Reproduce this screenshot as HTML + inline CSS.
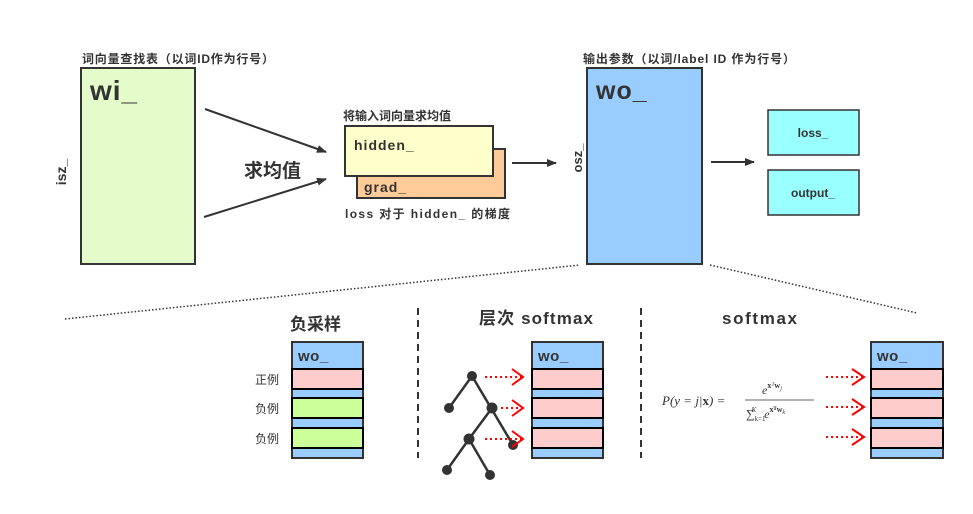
<!DOCTYPE html>
<html><head><meta charset="utf-8"><style>
body{margin:0;background:#fff;width:973px;height:509px;overflow:hidden}
svg text{font-family:"Liberation Sans","Noto Sans CJK SC",sans-serif;fill:#333}
</style></head><body>
<svg width="973" height="509" viewBox="0 0 973 509" xmlns="http://www.w3.org/2000/svg">
<defs>
<marker id="ah" markerWidth="10" markerHeight="8" refX="9" refY="4" orient="auto" markerUnits="userSpaceOnUse"><path d="M0,0 L10,4 L0,8 Z" fill="#333"/></marker>
</defs>
<text x="82" y="63" font-size="12" font-weight="bold" textLength="192">词向量查找表（以词ID作为行号）</text>
<rect x="81" y="68" width="114" height="196" fill="#e4fcca" stroke="#333" stroke-width="2"/>
<text x="90" y="100" font-size="28" font-weight="bold" letter-spacing="1">wi_</text>
<text transform="translate(66,172) rotate(-90)" font-size="14" font-weight="bold" text-anchor="middle">isz_</text>
<line x1="205" y1="109" x2="326" y2="152" stroke="#333" stroke-width="2" marker-end="url(#ah)"/>
<line x1="204" y1="217" x2="326" y2="179" stroke="#333" stroke-width="2" marker-end="url(#ah)"/>
<text x="244" y="177" font-size="19" font-weight="bold">求均值</text>
<text x="343" y="120" font-size="12" font-weight="bold">将输入词向量求均值</text>
<rect x="357" y="149" width="148" height="49" fill="#ffcc99" stroke="#333" stroke-width="2"/>
<rect x="345" y="126" width="148" height="50" fill="#ffffcc" stroke="#333" stroke-width="2"/>
<text x="354" y="150" font-size="14" font-weight="bold" letter-spacing="1">hidden_</text>
<text x="364" y="192" font-size="14" font-weight="bold" letter-spacing="1">grad_</text>
<text x="345" y="218" font-size="12" font-weight="bold" textLength="165">loss 对于 hidden_ 的梯度</text>
<line x1="512" y1="163" x2="556" y2="163" stroke="#333" stroke-width="2" marker-end="url(#ah)"/>
<text x="583" y="63" font-size="12" font-weight="bold" textLength="212">输出参数（以词/label ID 作为行号）</text>
<rect x="587" y="68" width="115" height="196" fill="#99ccff" stroke="#333" stroke-width="2"/>
<text x="596" y="99" font-size="25" font-weight="bold" letter-spacing="1">wo_</text>
<text transform="translate(582,158) rotate(-90)" font-size="13" font-weight="bold" text-anchor="middle">osz_</text>
<line x1="711" y1="162" x2="754" y2="162" stroke="#333" stroke-width="2" marker-end="url(#ah)"/>
<rect x="768" y="110" width="91" height="45" fill="#99ffff" stroke="#333" stroke-width="1.5"/>
<text x="813" y="137" font-size="12" font-weight="bold" text-anchor="middle">loss_</text>
<rect x="768" y="170" width="91" height="45" fill="#99ffff" stroke="#333" stroke-width="1.5"/>
<text x="813" y="197" font-size="12" font-weight="bold" text-anchor="middle">output_</text>
<line x1="65" y1="319" x2="580" y2="265" stroke="#333" stroke-width="1.5" stroke-dasharray="1.5,2"/>
<line x1="710" y1="265" x2="917" y2="313" stroke="#333" stroke-width="1.5" stroke-dasharray="1.5,2"/>
<line x1="418" y1="308" x2="418" y2="458" stroke="#333" stroke-width="2" stroke-dasharray="7,5"/>
<line x1="641" y1="308" x2="641" y2="458" stroke="#333" stroke-width="2" stroke-dasharray="7,5"/>
<text x="290" y="330" font-size="17" font-weight="bold">负采样</text>
<text x="479" y="324" font-size="17" font-weight="bold" textLength="114">层次 softmax</text>
<text x="722" y="324" font-size="17" font-weight="bold" textLength="75">softmax</text>
<g>
<rect x="292" y="342" width="71" height="116" fill="#99ccff" stroke="#333" stroke-width="2"/>
<text x="298" y="361" font-size="15" font-weight="bold" letter-spacing="0.5">wo_</text>
<rect x="292" y="369" width="71" height="20" fill="#ffcccc" stroke="#000" stroke-width="2"/>
<rect x="292" y="398" width="71" height="20" fill="#ccff99" stroke="#000" stroke-width="2"/>
<rect x="292" y="428" width="71" height="20" fill="#ccff99" stroke="#000" stroke-width="2"/>
</g>
<text x="255" y="384" font-size="12">正例</text>
<text x="255" y="413" font-size="12">负例</text>
<text x="255" y="443" font-size="12">负例</text>
<g>
<rect x="532" y="342" width="71" height="116" fill="#99ccff" stroke="#333" stroke-width="2"/>
<text x="538" y="361" font-size="15" font-weight="bold" letter-spacing="0.5">wo_</text>
<rect x="532" y="369" width="71" height="20" fill="#ffcccc" stroke="#000" stroke-width="2"/>
<rect x="532" y="398" width="71" height="20" fill="#ffcccc" stroke="#000" stroke-width="2"/>
<rect x="532" y="428" width="71" height="20" fill="#ffcccc" stroke="#000" stroke-width="2"/>
</g>
<g>
<rect x="871" y="342" width="72" height="116" fill="#99ccff" stroke="#333" stroke-width="2"/>
<text x="877" y="361" font-size="15" font-weight="bold" letter-spacing="0.5">wo_</text>
<rect x="871" y="369" width="72" height="20" fill="#ffcccc" stroke="#000" stroke-width="2"/>
<rect x="871" y="398" width="72" height="20" fill="#ffcccc" stroke="#000" stroke-width="2"/>
<rect x="871" y="428" width="72" height="20" fill="#ffcccc" stroke="#000" stroke-width="2"/>
</g>
<g stroke="#333" stroke-width="2.5" fill="none">
<path d="M449,408 L472,376 L513,445 M492,408 L469,439 L447,470 M469,439 L490,475"/>
</g>
<g fill="#333">
<circle cx="472" cy="376" r="5"/><circle cx="449" cy="408" r="5"/><circle cx="492" cy="408" r="5.5"/>
<circle cx="469" cy="439" r="5.5"/><circle cx="513" cy="445" r="5"/><circle cx="447" cy="470" r="5"/><circle cx="490" cy="475" r="5"/>
</g>
<g stroke="#ff0000" stroke-width="2" fill="none">
<line x1="485" y1="377" x2="522" y2="377" stroke-dasharray="2,3"/><path d="M512,369 L523,377 L512,385"/>
<line x1="501" y1="408" x2="522" y2="408" stroke-dasharray="2,3"/><path d="M512,400 L523,408 L512,416"/>
<line x1="485" y1="439" x2="522" y2="439" stroke-dasharray="2,3"/><path d="M512,431 L523,439 L512,447"/>
<line x1="826" y1="377" x2="862" y2="377" stroke-dasharray="2,3"/><path d="M852,369 L864,377 L852,385"/>
<line x1="826" y1="407" x2="862" y2="407" stroke-dasharray="2,3"/><path d="M852,399 L864,407 L852,415"/>
<line x1="826" y1="437" x2="862" y2="437" stroke-dasharray="2,3"/><path d="M852,429 L864,437 L852,445"/>
</g>
<g>
<text x="662" y="405" font-size="13" font-style="italic" style="font-family:'Liberation Serif',serif">P(y = j|<tspan font-weight="bold" font-style="normal">x</tspan>) =</text>
<text x="762" y="394" font-size="12" font-style="italic" style="font-family:'Liberation Serif',serif">e<tspan font-size="8" dy="-6" font-weight="bold" font-style="normal">x</tspan><tspan font-size="8">ᵀ</tspan><tspan font-size="8" font-weight="bold" font-style="normal">w</tspan><tspan font-size="6" dy="2">j</tspan></text>
<line x1="745" y1="400" x2="814" y2="400" stroke="#333" stroke-width="0.8"/>
<text x="746" y="418" font-size="12" style="font-family:'Liberation Serif',serif">∑<tspan font-size="7" dy="3">k=1</tspan><tspan font-size="7" dx="-14" dy="-9" font-style="italic">K</tspan><tspan font-size="12" dx="8" dy="6" font-style="italic">e</tspan><tspan font-size="8" dy="-6" font-weight="bold">xᵀw</tspan><tspan font-size="6" dy="2" font-style="italic">k</tspan></text>
</g>
</svg>
</body></html>
